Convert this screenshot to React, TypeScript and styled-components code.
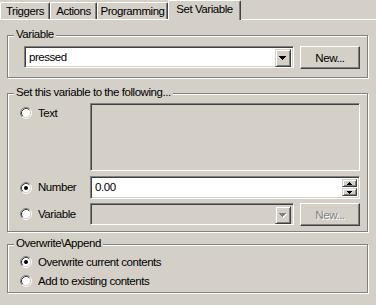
import React from 'react';
import styled, { createGlobalStyle } from 'styled-components';

const face = '#d4d0c8';
const light = '#ffffff';
const shadow = '#808080';
const dark = '#404040';

const GlobalStyle = createGlobalStyle`
  body {
    margin: 0;
    background: ${face};
  }
`;

const SWindow = styled.div`
  width: 376px;
  height: 305px;
  overflow: hidden;
  background: ${face};
  font-family: 'Liberation Sans', Arial, sans-serif;
  font-size: 11.5px;
  letter-spacing: -0.45px;
  color: #000;
`;

const STabStrip = styled.div`
  display: flex;
  align-items: flex-end;
  height: 20px;
  box-shadow: inset 0 -1px 0 ${light};
`;

const STab = styled.div<{ $active?: boolean; $width: number }>`
  box-sizing: border-box;
  width: ${({ $width }) => $width}px;
  height: ${({ $active }) => ($active ? 20 : 17)}px;
  margin-bottom: ${({ $active }) => ($active ? 0 : 1)}px;
  padding-bottom: ${({ $active }) => ($active ? 3 : 0)}px;
  display: flex;
  align-items: center;
  justify-content: center;
  background: ${face};
  border-top: 1px solid ${light};
  border-left: 1px solid ${light};
  border-right: 1px solid ${dark};
  box-shadow: inset -1px 0 0 ${shadow};
  border-top-left-radius: 2px;
  border-top-right-radius: 2px;
`;

const SPanel = styled.div`
  display: flex;
  flex-direction: column;
  padding: 0 8px 0 7px;
`;

const SGroup = styled.div<{ $top: number; $height: number }>`
  position: relative;
  box-sizing: border-box;
  margin-top: ${({ $top }) => $top}px;
  height: ${({ $height }) => $height}px;
  border: 1px solid ${shadow};
  box-shadow: inset 1px 1px 0 ${light}, 1px 1px 0 ${light};
`;

const SLegend = styled.span`
  position: absolute;
  top: -8px;
  left: 6px;
  padding: 0 2px 0 2px;
  line-height: 13px;
  background: ${face};
`;

const SGroupBody = styled.div<{ $pad: string }>`
  display: flex;
  flex-direction: column;
  padding: ${({ $pad }) => $pad};
`;

const SRow = styled.div<{ $gap?: number; $mt?: number; $align?: string }>`
  display: flex;
  align-items: ${({ $align }) => $align || 'center'};
  gap: ${({ $gap }) => $gap || 0}px;
  margin-top: ${({ $mt }) => $mt || 0}px;
`;

const SOptionCell = styled.div<{ $pt?: number }>`
  width: 70px;
  padding-top: ${({ $pt }) => $pt || 0}px;
  flex-shrink: 0;
`;

const SOption = styled.label<{ $height?: number }>`
  display: flex;
  align-items: center;
  gap: 6px;
  height: ${({ $height }) => $height || 12}px;
  line-height: 13px;
`;

const SSunken = styled.div<{ $width: number; $height: number; $disabled?: boolean }>`
  position: relative;
  box-sizing: border-box;
  width: ${({ $width }) => $width}px;
  height: ${({ $height }) => $height}px;
  display: flex;
  align-items: center;
  padding: 2px;
  background: ${({ $disabled }) => ($disabled ? face : light)};
  border-top: 1px solid ${shadow};
  border-left: 1px solid ${shadow};
  border-bottom: 1px solid ${light};
  border-right: 1px solid ${light};
  box-shadow: inset 1px 1px 0 ${dark}, inset -1px -1px 0 ${face};
`;

const SFieldText = styled.span`
  flex: 1;
  padding-left: 2px;
  line-height: 13px;
`;

const SDropButton = styled.div`
  box-sizing: border-box;
  width: 16px;
  height: 18px;
  align-self: stretch;
  display: flex;
  align-items: center;
  justify-content: center;
  background: ${face};
  border-top: 1px solid ${face};
  border-left: 1px solid ${face};
  border-right: 1px solid ${dark};
  border-bottom: 1px solid ${dark};
  box-shadow: inset 1px 1px 0 ${light}, inset -1px -1px 0 ${shadow};
`;

const SSpinner = styled.div`
  display: flex;
  flex-direction: column;
  gap: 1px;
  align-self: stretch;
`;

const SSpinButton = styled(SDropButton)`
  width: 15px;
  height: auto;
  flex: 1;
`;

const SButton = styled.div<{ $disabled?: boolean }>`
  box-sizing: border-box;
  width: 60px;
  height: 23px;
  display: flex;
  align-items: center;
  justify-content: center;
  background: ${face};
  border-top: 1px solid ${light};
  border-left: 1px solid ${light};
  border-right: 1px solid ${dark};
  border-bottom: 1px solid ${dark};
  box-shadow: inset -1px -1px 0 ${shadow};
  color: ${({ $disabled }) => ($disabled ? shadow : '#000')};
  text-shadow: ${({ $disabled }) => ($disabled ? `1px 1px 0 ${light}` : 'none')};
`;

const Radio: React.FC<{ checked?: boolean }> = ({ checked }) => (
  <svg width="12" height="12" viewBox="0 0 12 12">
    <circle cx="6" cy="6" r="4.5" fill={light} />
    <path d="M2.11 9.89A5.5 5.5 0 0 1 9.89 2.11" fill="none" stroke={shadow} />
    <path d="M9.89 2.11A5.5 5.5 0 0 1 2.11 9.89" fill="none" stroke={light} />
    <path d="M2.82 9.18A4.5 4.5 0 0 1 9.18 2.82" fill="none" stroke={dark} />
    <path d="M9.18 2.82A4.5 4.5 0 0 1 2.82 9.18" fill="none" stroke={face} />
    {checked && <circle cx="6" cy="6" r="2" fill="#000" />}
  </svg>
);

const ArrowDown: React.FC<{ disabled?: boolean }> = ({ disabled }) => (
  <svg width="8" height="5" viewBox="0 0 8 5" shapeRendering="crispEdges">
    {disabled && <path d="M1 1h7v1H1zM2 2h5v1H2zM3 3h3v1H3zM4 4h1v1H4z" fill={light} />}
    <path d="M0 0h7v1H0zM1 1h5v1H1zM2 2h3v1H2zM3 3h1v1H3z" fill={disabled ? shadow : '#000'} />
  </svg>
);

const SmallArrow: React.FC<{ up?: boolean }> = ({ up }) => (
  <svg width="5" height="3" viewBox="0 0 5 3" shapeRendering="crispEdges">
    {up ? (
      <path d="M2 0h1v1H2zM1 1h3v1H1zM0 2h5v1H0z" fill="#000" />
    ) : (
      <path d="M0 0h5v1H0zM1 1h3v1H1zM2 2h1v1H2z" fill="#000" />
    )}
  </svg>
);

const Combo: React.FC<{ width: number; value?: string; disabled?: boolean }> = ({
  width,
  value,
  disabled,
}) => (
  <SSunken $width={width} $height={22} $disabled={disabled}>
    <SFieldText>{value}</SFieldText>
    <SDropButton>
      <ArrowDown disabled={disabled} />
    </SDropButton>
  </SSunken>
);

const tabs = [
  { label: 'Triggers', width: 50 },
  { label: 'Actions', width: 47 },
  { label: 'Programming', width: 71 },
  { label: 'Set Variable', width: 73, active: true },
];

export default function App() {
  return (
    <SWindow>
      <GlobalStyle />
      <STabStrip>
        {tabs.map((t) => (
          <STab key={t.label} $width={t.width} $active={t.active}>
            {t.label}
          </STab>
        ))}
      </STabStrip>
      <SPanel>
        <SGroup $top={15} $height={43}>
          <SLegend>Variable</SLegend>
          <SGroupBody $pad="10px 0 0 16px">
            <SRow $gap={6} $align="flex-start">
              <Combo width={270} value="pressed" />
              <SButton>New...</SButton>
            </SRow>
          </SGroupBody>
        </SGroup>

        <SGroup $top={15} $height={139}>
          <SLegend>Set this variable to the following...</SLegend>
          <SGroupBody $pad="9px 0 0 12px">
            <SRow $align="flex-start">
              <SOptionCell $pt={4}>
                <SOption>
                  <Radio />
                  Text
                </SOption>
              </SOptionCell>
              <SSunken $width={270} $height={68} $disabled />
            </SRow>
            <SRow $mt={5}>
              <SOptionCell>
                <SOption>
                  <Radio checked />
                  Number
                </SOption>
              </SOptionCell>
              <SSunken $width={270} $height={23}>
                <SFieldText>0.00</SFieldText>
                <SSpinner>
                  <SSpinButton>
                    <SmallArrow up />
                  </SSpinButton>
                  <SSpinButton>
                    <SmallArrow />
                  </SSpinButton>
                </SSpinner>
              </SSunken>
            </SRow>
            <SRow $mt={4} $align="flex-start">
              <SOptionCell $pt={5}>
                <SOption>
                  <Radio />
                  Variable
                </SOption>
              </SOptionCell>
              <SRow $gap={6} $align="flex-start">
                <Combo width={204} disabled />
                <SButton $disabled>New...</SButton>
              </SRow>
            </SRow>
          </SGroupBody>
        </SGroup>

        <SGroup $top={12} $height={49}>
          <SLegend>Overwrite\Append</SLegend>
          <SGroupBody $pad="11px 0 0 12px">
            <SOption>
              <Radio checked />
              Overwrite current contents
            </SOption>
            <SRow $mt={7}>
              <SOption>
                <Radio />
                Add to existing contents
              </SOption>
            </SRow>
          </SGroupBody>
        </SGroup>
      </SPanel>
    </SWindow>
  );
}
